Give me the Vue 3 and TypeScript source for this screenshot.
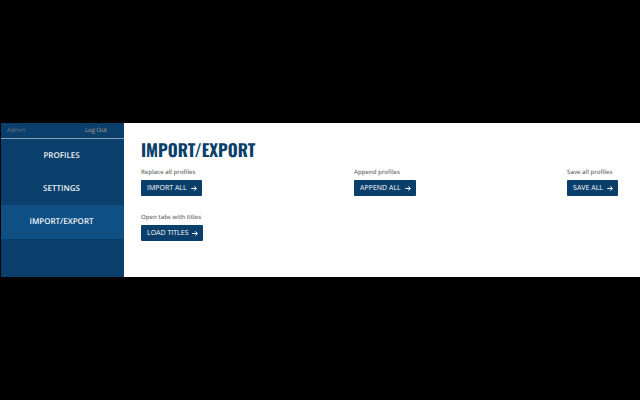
<script setup lang="ts">
import { ref } from 'vue'

interface Action {
  id: string
  label: string
  button: string
}

const pages: string[] = ['Profiles', 'Settings', 'Import/Export']
const current = ref('Import/Export')

const actions: Action[] = [
  { id: 'import', label: 'Replace all profiles', button: 'Import all' },
  { id: 'append', label: 'Append profiles', button: 'Append all' },
  { id: 'save', label: 'Save all profiles', button: 'Save all' },
  { id: 'titles', label: 'Open tabs with titles', button: 'Load titles' },
]
</script>

<template>
  <div class="screen">
    <div class="panel">
      <aside class="sidebar">
        <div class="account">
          <span class="user">Admin</span>
          <a class="logout" href="#">Log Out</a>
        </div>
        <nav class="menu">
          <a
            v-for="page in pages"
            :key="page"
            href="#"
            class="menu-item"
            :class="{ active: page === current }"
            @click.prevent="current = page"
          >{{ page }}</a>
        </nav>
      </aside>
      <main class="content">
        <h1 class="title">{{ current }}</h1>
        <div class="actions">
          <section v-for="action in actions" :key="action.id" class="action">
            <p :id="action.id" class="caption">{{ action.label }}</p>
            <button type="button" class="button" :aria-describedby="action.id">
              <span>{{ action.button }}</span>
              <svg class="arrow" viewBox="0 0 12 10" aria-hidden="true">
                <path d="M0.5 5H10.5M6.5 0.8L10.8 5L6.5 9.2" />
              </svg>
            </button>
          </section>
        </div>
      </main>
    </div>
  </div>
</template>

<style>
body {
  background: #000;
}
</style>

<style scoped>
.screen {
  min-height: 100vh;
  display: flex;
  flex-direction: column;
  justify-content: center;
  padding-left: 1px;
  box-sizing: border-box;
  background: #000;
  font-family: "Open Sans", "Noto Sans", sans-serif;
  text-rendering: geometricPrecision;
}

.panel {
  display: flex;
  background: #fff;
}

.sidebar {
  flex: 0 0 123px;
  background: #0a3f6b;
}

.account {
  display: flex;
  justify-content: space-between;
  padding: 0 17px 0 6px;
  border-bottom: 1px solid #829fb6;
  font-size: 6px;
  line-height: 15px;
}

.user {
  color: #6b7587;
}

.logout {
  color: #b89f98;
  text-decoration: none;
}

.menu-item {
  display: block;
  padding-right: 2px;
  color: #f1f5f8;
  font-size: 8px;
  font-weight: 600;
  line-height: 33px;
  text-align: center;
  text-decoration: none;
  text-transform: uppercase;
}

.menu-item.active {
  padding-bottom: 1px;
  background: #0e4f84;
}

.content {
  flex: 1;
  min-width: 0;
  padding: 17px 22px 36px 17px;
}

.title {
  margin: 0;
  color: #0a3f6b;
  font-family: Oswald, "Open Sans Condensed", "Roboto Condensed", "Liberation Sans Narrow", sans-serif;
  font-size: 17px;
  font-weight: 700;
  line-height: 20px;
  text-transform: uppercase;
}

.actions {
  display: grid;
  grid-template-columns: 1fr 1fr auto;
  row-gap: 16px;
  padding-top: 7px;
}

.caption {
  margin: 0 0 3px;
  color: #707070;
  font-size: 6px;
  font-weight: 600;
  line-height: 10px;
}

.button {
  display: flex;
  align-items: center;
  gap: 4px;
  height: 16px;
  padding: 0 5px 0 6px;
  border: 0;
  border-radius: 1px;
  background: #0a3f6b;
  color: #fff;
  font-family: inherit;
  font-size: 7px;
  text-rendering: inherit;
  text-transform: uppercase;
  white-space: nowrap;
}

.arrow {
  width: 6px;
  height: 5px;
  fill: none;
  stroke: currentColor;
  stroke-width: 2;
}
</style>
